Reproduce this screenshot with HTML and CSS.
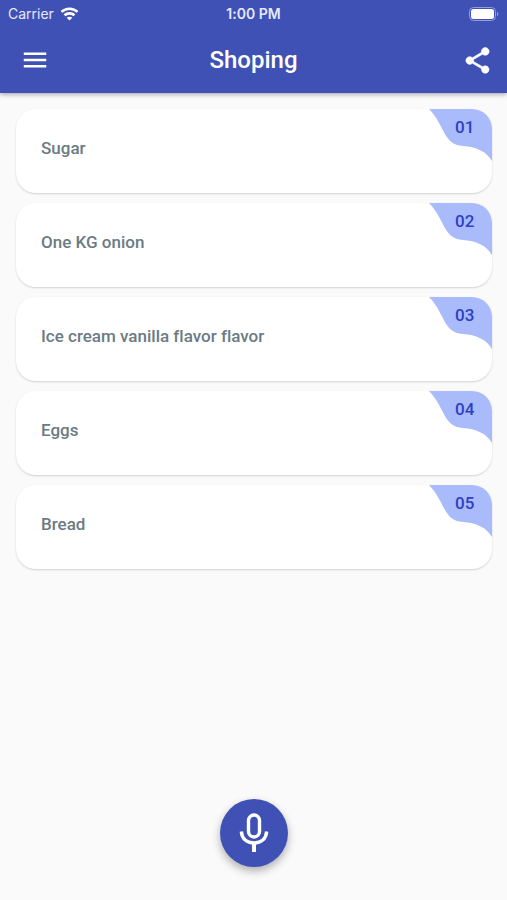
FILE: index.html
```html
<!DOCTYPE html>
<html lang="en">

<head>
    <meta charset="UTF-8">
    <meta name="viewport" content="width=device-width, initial-scale=1.0">
    <title>Shoping</title>
    <link rel="stylesheet" href="styles.css">
</head>

<body>
    <header class="header">
        <div class="status">
            <div class="carrier">
                <span>Carrier</span>
                <svg width="19" height="14" viewBox="0 0 18 14" fill="none" stroke="#fff" stroke-width="2.6">
                    <path d="M1 4.9C5.5.6 12.5.6 17 4.9" />
                    <path d="M4 8.3c2.8-2.6 7.2-2.6 10 0" />
                    <path d="M9 13.6l-2.8-2.9c1.6-1.4 4-1.4 5.6 0z" fill="#fff" stroke="none" />
                </svg>
            </div>
            <span class="time">1:00 PM</span>
            <svg class="battery" width="30" height="14" viewBox="0 0 30 14">
                <rect x=".5" y=".5" width="26" height="13" rx="4" fill="none" stroke="#949dd8" />
                <rect x="2" y="2" width="23" height="10" rx="2.5" fill="#fff" />
                <path d="M28 4.8c1.8.7 1.8 3.7 0 4.4z" fill="#949dd8" />
            </svg>
        </div>
        <div class="toolbar">
            <button class="icon-btn" aria-label="Menu">
                <svg width="30" height="30" viewBox="0 0 24 24" fill="#fff">
                    <path d="M3 18h18v-2H3v2zm0-5h18v-2H3v2zm0-7v2h18V6H3z" />
                </svg>
            </button>
            <h1>Shoping</h1>
            <button class="icon-btn share" aria-label="Share">
                <svg width="31" height="31" viewBox="0 0 24 24" fill="#fff">
                    <path d="M18 16.08c-.76 0-1.44.3-1.96.77L8.91 12.7c.05-.23.09-.46.09-.7s-.04-.47-.09-.7l7.05-4.11c.54.5 1.25.81 2.04.81 1.66 0 3-1.34 3-3s-1.34-3-3-3-3 1.34-3 3c0 .24.04.47.09.7L8.04 9.81C7.5 9.31 6.79 9 6 9c-1.66 0-3 1.34-3 3s1.34 3 3 3c.79 0 1.5-.31 2.04-.81l7.12 4.16c-.05.21-.08.43-.08.65 0 1.61 1.31 2.92 2.92 2.92s2.92-1.31 2.92-2.92-1.31-2.92-2.92-2.92z" stroke="#fff" stroke-width=".4" />
                </svg>
            </button>
        </div>
    </header>

    <main>
        <ul class="list">
            <li class="card">
                <p>Sugar</p>
                <div class="badge">
                    <svg viewBox="0 0 63 52"><path d="M0 0H63V52C57 42 47 38 34 37C14 36 16 16 0 0z" /></svg>
                    <span>01</span>
                </div>
            </li>
            <li class="card">
                <p>One KG onion</p>
                <div class="badge">
                    <svg viewBox="0 0 63 52"><path d="M0 0H63V52C57 42 47 38 34 37C14 36 16 16 0 0z" /></svg>
                    <span>02</span>
                </div>
            </li>
            <li class="card">
                <p>Ice cream vanilla flavor flavor</p>
                <div class="badge">
                    <svg viewBox="0 0 63 52"><path d="M0 0H63V52C57 42 47 38 34 37C14 36 16 16 0 0z" /></svg>
                    <span>03</span>
                </div>
            </li>
            <li class="card">
                <p>Eggs</p>
                <div class="badge">
                    <svg viewBox="0 0 63 52"><path d="M0 0H63V52C57 42 47 38 34 37C14 36 16 16 0 0z" /></svg>
                    <span>04</span>
                </div>
            </li>
            <li class="card">
                <p>Bread</p>
                <div class="badge">
                    <svg viewBox="0 0 63 52"><path d="M0 0H63V52C57 42 47 38 34 37C14 36 16 16 0 0z" /></svg>
                    <span>05</span>
                </div>
            </li>
        </ul>
    </main>

    <footer class="footer">
        <button class="mic" aria-label="Record">
            <svg width="30" height="40" viewBox="0 0 30 40" fill="none" stroke="#fff" stroke-width="3.4">
                <rect x="9.500" y="2" width="11" height="22" rx="5.500" />
                <path d="M2.300 18.500C3 26 8 30 15 30s12-4 12.700-11.500" />
                <path d="M15 30v9" stroke-width="4" />
            </svg>
        </button>
    </footer>
</body>

</html>
```
FILE: styles.css
```css
* {
    margin: 0;
    padding: 0;
    box-sizing: border-box;
}

body {
    min-height: 100vh;
    display: flex;
    flex-direction: column;
    background-color: #fafafa;
    font-family: Roboto, sans-serif;
    font-variant-ligatures: none;
}

button {
    border: none;
    background: none;
    cursor: pointer;
}

svg {
    display: block;
}

.header {
    background-color: #3f51b5;
    color: #fff;
    box-shadow: 0 1px 5px rgba(0, 0, 0, 0.4);
}

.status {
    display: grid;
    grid-template-columns: 1fr auto 1fr;
    align-items: center;
    height: 27px;
    padding: 0 8px;
    font-family: Inter, sans-serif;
    font-size: 14px;
    color: #e6e9fa;
}

.carrier {
    display: flex;
    align-items: center;
    gap: 6px;
}

.time {
    font-size: 14px;
    font-weight: 600;
}

.battery {
    justify-self: end;
}

.toolbar {
    display: grid;
    grid-template-columns: 1fr auto 1fr;
    align-items: center;
    height: 66px;
    padding: 0 14px 0 20px;
}

.toolbar h1 {
    margin-right: 6px;
    font-size: 24px;
    font-weight: 500;
}

.icon-btn {
    justify-self: start;
}

.share {
    justify-self: end;
}

.list {
    list-style: none;
    display: flex;
    flex-direction: column;
    gap: 10px;
    padding: 16px 15px 15px 16px;
}

.card {
    display: flex;
    justify-content: space-between;
    height: 84px;
    padding-left: 25px;
    background-color: #fff;
    border-radius: 20px;
    box-shadow: 0 1px 2px rgba(0, 0, 0, 0.16);
    overflow: hidden;
}

.card p {
    padding-top: 28px;
    font-size: 17px;
    line-height: 22px;
    font-weight: 500;
    color: #6b7b85;
}

.badge {
    display: grid;
    width: 63px;
    height: 52px;
}

.badge svg,
.badge span {
    grid-area: 1 / 1;
}

.badge path {
    fill: #a9bbfb;
}

.badge span {
    z-index: 1;
    padding: 8px 0 0 26px;
    font-size: 17px;
    line-height: 20px;
    font-weight: 500;
    color: #303fc4;
}

.footer {
    display: flex;
    justify-content: center;
    margin-top: auto;
    padding-bottom: 33px;
}

.mic {
    display: flex;
    align-items: center;
    justify-content: center;
    width: 68px;
    height: 68px;
    border-radius: 50%;
    background-color: #3f51b5;
    box-shadow: 0 4px 8px rgba(0, 0, 0, 0.3);
}
```
